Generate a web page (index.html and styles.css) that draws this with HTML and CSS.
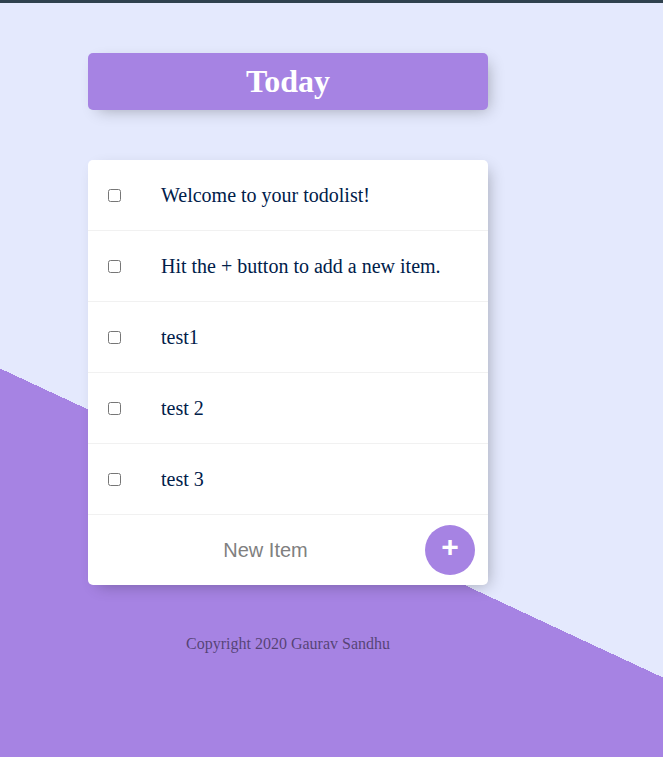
FILE: index.html
```
<!DOCTYPE html>
<html lang="en">
<head>
<meta charset="utf-8">
<title>To Do List</title>
<link rel="stylesheet" href="styles.css">
</head>
<body>
<div class="topbar"></div>
<main class="wrap">
  <div class="box heading">
    <h1>Today</h1>
  </div>
  <div class="box">
    <div class="item">
      <input type="checkbox" class="check">
      <p class="text">Welcome to your todolist!</p>
    </div>
    <div class="item">
      <input type="checkbox" class="check">
      <p class="text">Hit the + button to add a new item.</p>
    </div>
    <div class="item">
      <input type="checkbox" class="check">
      <p class="text">test1</p>
    </div>
    <div class="item">
      <input type="checkbox" class="check">
      <p class="text">test 2</p>
    </div>
    <div class="item">
      <input type="checkbox" class="check">
      <p class="text">test 3</p>
    </div>
    <form class="item form" onsubmit="return false">
      <input type="text" class="new-item" placeholder="New Item" autocomplete="off">
      <button type="submit" class="add">+</button>
    </form>
  </div>
  <footer class="footer">Copyright 2020 Gaurav Sandhu</footer>
</main>
</body>
</html>
```
FILE: styles.css
```
html {
  background-color: #E4E9FD;
  background-image: linear-gradient(25deg, #A683E3 50%, #E4E9FD 50%);
  background-size: 100% 1046px;
  background-repeat: no-repeat;
  min-height: 100%;
  font-family: "Liberation Serif", "Times New Roman", serif;
}

body {
  margin: 0;
}

.topbar {
  height: 3px;
  background: #2f414e;
}

.wrap {
  width: 400px;
  margin-left: 88px;
  padding-top: 50px;
}

.box {
  background: #fff;
  border-radius: 5px;
  box-shadow: 5px 5px 15px -5px rgba(0, 0, 0, 0.3);
  margin-bottom: 50px;
}

.heading {
  background-color: #A683E3;
  text-align: center;
}

.heading h1 {
  margin: 0;
  padding: 10px;
  color: #fff;
  font-size: 32px;
  line-height: 37px;
  font-weight: bold;
}

.item {
  min-height: 70px;
  display: flex;
  align-items: center;
  border-bottom: 1px solid #F1F1F1;
}

.item:last-child {
  border-bottom: 0;
}

.check {
  margin: 20px;
  width: 13px;
  height: 13px;
}

.text {
  margin: 0;
  padding: 20px;
  font-size: 20px;
  font-weight: 200;
  color: #00204a;
}

.form {
  padding-left: 20px;
  gap: 4px;
}

.new-item {
  box-sizing: border-box;
  text-align: center;
  height: 60px;
  border: none;
  padding: 0 0 0 2px;
  font-size: 20px;
  font-family: "Liberation Sans", Arial, sans-serif;
  width: 313px;
  outline: none;
}

.new-item::placeholder {
  color: grey;
  opacity: 1;
}

.add {
  height: 50px;
  width: 50px;
  border-radius: 50%;
  border: 0;
  background-color: #A683E3;
  color: #fff;
  font-size: 30px;
  font-weight: bold;
  font-family: "Liberation Sans", Arial, sans-serif;
  padding: 0 0 6px;
  line-height: 1;
}

.footer {
  color: rgba(0, 0, 0, 0.5);
  text-align: center;
  font-size: 16px;
}
```
